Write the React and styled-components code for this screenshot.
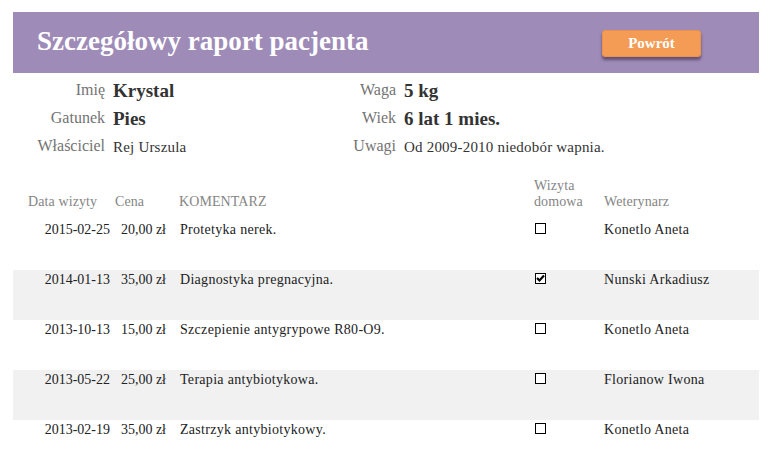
import styled, { createGlobalStyle } from "styled-components";

const GlobalStyle = createGlobalStyle`
  body {
    margin: 0;
    background: #fff;
    font-family: "Liberation Serif", "Times New Roman", serif;
  }
`;

const patient = [
  [
    { label: "Imię", value: "Krystal", big: true },
    { label: "Waga", value: "5 kg", big: true },
  ],
  [
    { label: "Gatunek", value: "Pies", big: true },
    { label: "Wiek", value: "6 lat 1 mies.", big: true },
  ],
  [
    { label: "Właściciel", value: "Rej Urszula" },
    { label: "Uwagi", value: "Od 2009-2010 niedobór wapnia." },
  ],
];

const visits = [
  { date: "2015-02-25", price: "20,00 zł", comment: "Protetyka nerek.", home: false, vet: "Konetlo Aneta" },
  { date: "2014-01-13", price: "35,00 zł", comment: "Diagnostyka pregnacyjna.", home: true, vet: "Nunski Arkadiusz" },
  { date: "2013-10-13", price: "15,00 zł", comment: "Szczepienie antygrypowe R80-O9.", home: false, vet: "Konetlo Aneta" },
  { date: "2013-05-22", price: "25,00 zł", comment: "Terapia antybiotykowa.", home: false, vet: "Florianow Iwona" },
  { date: "2013-02-19", price: "35,00 zł", comment: "Zastrzyk antybiotykowy.", home: false, vet: "Konetlo Aneta" },
];

const App = () => {
  return (
    <Page>
      <GlobalStyle />
      <Header>
        <Title>Szczegółowy raport pacjenta</Title>
        <BackButton>Powrót</BackButton>
      </Header>

      <Info>
        {patient.map((row, i) => (
          <InfoRow key={i}>
            {row.map((f) => (
              <Field key={f.label}>
                <Label>{f.label}</Label>
                <Value $big={f.big}>{f.value}</Value>
              </Field>
            ))}
          </InfoRow>
        ))}
      </Info>

      <Table>
        <HeadRow>
          <HeadCell $pad="15px">Data wizyty</HeadCell>
          <HeadCell $pad="5px">Cena</HeadCell>
          <HeadCell $pad="13px">KOMENTARZ</HeadCell>
          <HeadCell $pad="4px">
            Wizyta
            <br />
            domowa
          </HeadCell>
          <HeadCell $pad="4px">Weterynarz</HeadCell>
        </HeadRow>
        {visits.map((v, i) => (
          <Row key={v.date} $striped={i % 2 === 1}>
            <Cell $right>{v.date}</Cell>
            <Cell $right>{v.price}</Cell>
            <Cell $pad="14px" $wide>{v.comment}</Cell>
            <Cell $pad="5px">
              <Check>
                {v.home && (
                  <svg width="9" height="9" viewBox="0 0 9 9">
                    <path d="M1 4 L3.5 6.5 L8 1.5" fill="none" stroke="#000" strokeWidth="2.2" />
                  </svg>
                )}
              </Check>
            </Cell>
            <Cell $pad="4px" $wide>{v.vet}</Cell>
          </Row>
        ))}
      </Table>
    </Page>
  );
};

export default App;

const Page = styled.div`
  width: 746px;
  margin: 12px 13px 0;
  color: #222;
`;

const Header = styled.div`
  height: 61px;
  display: flex;
  align-items: center;
  justify-content: space-between;
  padding: 0 58px 0 24px;
  box-sizing: border-box;
  background: #9e8bb7;
`;

const Title = styled.h1`
  margin: 0;
  margin-top: -2px;
  font-size: 27px;
  font-weight: bold;
  color: #fff;
`;

const BackButton = styled.button`
  width: 99px;
  height: 27px;
  margin-top: 2px;
  border: 1px solid #ea924c;
  border-radius: 3px;
  background: #f49c56;
  color: #fff;
  font-family: "Liberation Serif", serif;
  font-size: 15px;
  font-weight: bold;
  box-shadow: 0 3px 3px rgba(60, 40, 70, 0.6);
  cursor: pointer;
`;

const Info = styled.div`
  margin-top: 4px;
`;

const InfoRow = styled.div`
  display: grid;
  grid-template-columns: 291px 1fr;
  height: 28px;
`;

const Field = styled.div`
  display: flex;
  align-items: center;
  gap: 8px;
`;

const Label = styled.div`
  width: 92px;
  text-align: right;
  font-size: 16px;
  color: #737373;
  margin-top: -3px;
`;

const Value = styled.div`
  font-size: ${(p) => (p.$big ? "19px" : "15px")};
  font-weight: ${(p) => (p.$big ? "bold" : "normal")};
  letter-spacing: ${(p) => (p.$big ? "0" : "0.2px")};
  color: #333;
`;

const Table = styled.div`
  margin-top: 17px;
`;

const grid = `
  display: grid;
  grid-template-columns: 97px 56px 364px 70px 1fr;
`;

const HeadRow = styled.div`
  ${grid}
  align-items: end;
  height: 32px;
  margin-bottom: 10px;
`;

const HeadCell = styled.div`
  padding-left: ${(p) => p.$pad || "0"};
  font-size: 14px;
  line-height: 16px;
  letter-spacing: 0.1px;
  color: #858585;
`;

const Row = styled.div`
  ${grid}
  align-items: start;
  height: 50px;
  background: ${(p) => (p.$striped ? "#f1f1f1" : "transparent")};
`;

const Cell = styled.div`
  padding-left: ${(p) => p.$pad || "0"};
  text-align: ${(p) => (p.$right ? "right" : "left")};
  font-size: 14px;
  line-height: 20px;
  letter-spacing: ${(p) => (p.$wide ? "0.3px" : "0")};
  color: #222;
`;

const Check = styled.span`
  display: flex;
  align-items: center;
  justify-content: center;
  width: 9px;
  height: 9px;
  margin-top: 3px;
  border: 1px solid #000;
  background: #fff;
`;
